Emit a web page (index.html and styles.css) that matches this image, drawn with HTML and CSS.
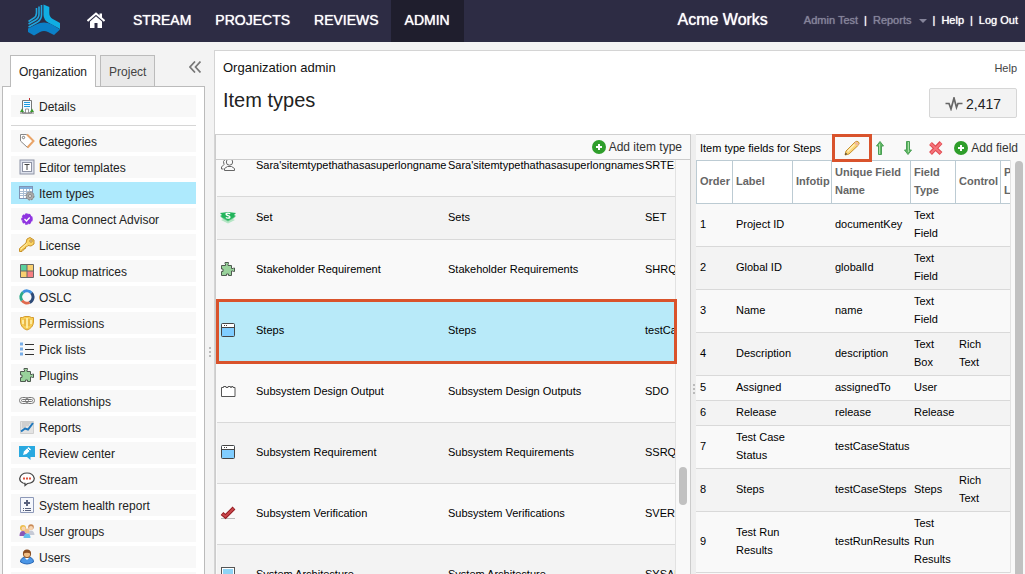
FILE: index.html
```html
<!DOCTYPE html>
<html lang="en">
<head>
  <meta charset="UTF-8" />
  <meta name="viewport" content="width=device-width, initial-scale=1.0"/>
  <title>Organization admin - Item types</title>
  <link rel="stylesheet" href="styles.css">
</head>
<body>

  <!-- Shared icons -->
  <svg class="sprite" aria-hidden="true">
    <symbol id="i-puzzle" viewBox="0 0 16 16">
      <path d="M1.5 4.5h4V3L5 2.5v-1h3.5v1L8 3v1.5h3.500V7.500H13L13.500 7h1v3.500h-1L13 10h-1.500v4.500H8.500V13h-2v1.500h-5v-4H3v-2.500H1.500z" fill="#99d29b" stroke="#4f5a50"/>
    </symbol>
    <symbol id="i-window" viewBox="0 0 16 16">
      <rect x="1.500" y="1.500" width="13" height="13" rx="1" fill="#80cdff" stroke="#444"/>
      <path d="M2 2h12v3H2z" fill="#fff"/>
      <path d="M2 5.500h12" stroke="#444"/>
      <path d="M4 3.500h1M6 3.500h1" stroke="#444"/>
    </symbol>
    <symbol id="i-plus" viewBox="0 0 14 14">
      <circle cx="7" cy="7" r="7" fill="#2f9e2b"/>
      <path d="M7 4v6M4 7h6" stroke="#fff" stroke-width="2"/>
    </symbol>
    <symbol id="i-arrow" viewBox="0 0 10 16">
      <path d="M5 1.500L8.500 6H6.500v8.500h-3V6h-2z" fill="#62b866" stroke="#4a9f55"/>
      <path d="M4.500 4v10" stroke="#a9dfa5"/>
    </symbol>
  </svg>

  <header class="topbar">
    <a href="#" class="logo" aria-label="Jama">
      <svg width="32" height="32" viewBox="0 0 32 32">
        <path d="M8.500 4v5q0 3.500-3 5.200L.5 17.500M11 2.500V10q0 4-3.500 6L.5 20M13.500 1v10q0 4.500-4 7L.5 23" fill="none" stroke="#1fa5dc" stroke-width="1.600"/>
        <path d="M15.500.5l5.800 2.500V9q0 4 3.500 6L32 19v6l-11-6q-5.500-3-5.500-8z" fill="#10aee3"/>
        <path d="M0 24.500l8-4q8-4 16 0l8 5-6 5.500-6-3q-4-2-8 0l-6 3.500L0 28z" fill="#0b80c8"/>
      </svg>
    </a>
    <a href="#" class="home" aria-label="Home">
      <svg width="18" height="17" viewBox="0 0 18 17">
        <path d="M0.500 9L9 1.500 17.500 9" fill="none" stroke="#fff" stroke-width="2"/>
        <path d="M12.500 1.500h2.500v5l-2.500-2z" fill="#fff"/>
        <path d="M3 9.500l6-5.300 6 5.300V16h-4.500v-5h-3v5H3z" fill="#fff"/>
      </svg>
    </a>
    <nav class="mainnav">
      <a href="#">STREAM</a>
      <a href="#">PROJECTS</a>
      <a href="#">REVIEWS</a>
      <a href="#" class="active">ADMIN</a>
    </nav>
    <div class="company">Acme Works</div>
    <div class="userlinks">
      <a href="#" class="dim">Admin Test</a>
      <span>|</span>
      <a href="#" class="dim">Reports <i class="caret"></i></a>
      <span>|</span>
      <a href="#">Help</a>
      <span>|</span>
      <a href="#">Log Out</a>
    </div>
  </header>

  <div class="workspace">

    <!-- Left menu -->
    <aside class="sidebar">
      <div class="tabs">
        <button type="button" class="tab selected">Organization</button>
        <button type="button" class="tab">Project</button>
        <button type="button" class="collapse" aria-label="Collapse">
          <svg width="12" height="12" viewBox="0 0 12 12"><path d="M6 0.500L1 6l5 5.500M11.500 0.500L6.500 6l5 5.500" fill="none" stroke="#777" stroke-width="1.700"/></svg>
        </button>
      </div>
      <ul class="menu">
        <li class="details"><a href="#">
          <svg width="16" height="16" viewBox="0 0 16 16"><path d="M3.500 2.500h9V15h-9z" fill="#f4fbff" stroke="#777"/><path d="M5 4.500h6M5 6.500h6M5 8.500h6" stroke="#1f9be0"/><path d="M10.500 0v2" stroke="#b33"/><path d="M6.500 15v-4h3v4" fill="#fff" stroke="#999"/><path d="M1 14l2-3.500L5 14zM11 14l2-3.500 2 3.500z" fill="#3c9a2f"/><path d="M1 15h14" stroke="#777"/></svg>
          Details</a></li>
        <li><a href="#">
          <svg width="16" height="16" viewBox="0 0 16 16"><path d="M1.500 1.500h6L14.500 8 8.500 14.500 1.500 8z" fill="#fff" stroke="#888"/><path d="M8 1.500L14.500 8 8.500 14.500" fill="none" stroke="#e9a56a" stroke-width="2"/><circle cx="4.500" cy="4.500" r="1.200" fill="#fff" stroke="#777"/></svg>
          Categories</a></li>
        <li><a href="#">
          <svg width="16" height="16" viewBox="0 0 16 16"><rect x="1" y="1" width="14" height="14" fill="#dfe3ee" stroke="#8e93a5" stroke-width="1"/><rect x="3.500" y="3.500" width="9" height="9" fill="#fff" stroke="#8e93a5"/><path d="M5.500 5.500h5M8 5.500V11" stroke="#444"/></svg>
          Editor templates</a></li>
        <li class="current"><a href="#">
          <svg width="16" height="16" viewBox="0 0 16 16"><rect x="0.500" y="1.500" width="13" height="12" fill="#fff" stroke="#7f94b5"/><path d="M1 3h12" stroke="#7fb0dd" stroke-width="2"/><path d="M1 6.500h12M1 8.500h12M1 10.500h12M4.500 4v9M7.500 4v9M10.500 4v9" stroke="#a9bdd3"/><circle cx="11" cy="11" r="4" fill="#aaa" stroke="#808080" stroke-dasharray="2 1"/><circle cx="11" cy="11" r="1.500" fill="#eee" stroke="#888"/></svg>
          Item types</a></li>
        <li><a href="#">
          <svg width="16" height="16" viewBox="0 0 16 16"><circle cx="8" cy="8" r="5" fill="#8f35e0" stroke="#8f35e0" stroke-width="1.500" stroke-dasharray="2.500 1"/><path d="M5.500 8l2 2 3.200-3.500" fill="none" stroke="#fff" stroke-width="1.300"/></svg>
          Jama Connect Advisor</a></li>
        <li><a href="#">
          <svg width="16" height="16" viewBox="0 0 16 16"><path d="M7 6l1-4 3-1.500 4 2.500v4l-3 2-3-.5-1.500 1.500-1 0v1.500H5V13H3v1.500H.500v-3z" fill="#fbd565" stroke="#c8922a"/><path d="M2 12l6-5.500" stroke="#fff0b0"/><circle cx="12" cy="4" r="1.200" fill="#fff" stroke="#b98222"/></svg>
          License</a></li>
        <li><a href="#">
          <svg width="16" height="16" viewBox="0 0 16 16"><path d="M2 2h6v6H2z" fill="#58cf9c"/><path d="M8 2h6v6H8zM2 8h6v6H2z" fill="#f8cf70"/><path d="M8 8h6v6H8z" fill="#f77f83"/><path d="M1.500 1.500h13v13h-13zM8 2v12M2 8h12" fill="none" stroke="#676767"/></svg>
          Lookup matrices</a></li>
        <li><a href="#">
          <svg width="16" height="16" viewBox="0 0 16 16" fill="none" stroke-width="3"><path d="M4 3.300A6 6 0 0 1 12.500 4" stroke="#3e8ede"/><path d="M12.500 4A6 6 0 0 1 10.500 13.500" stroke="#2d4a77"/><path d="M10.500 13.500A6 6 0 0 1 3 11.500" stroke="#e06a4e"/><path d="M3 11.500A6 6 0 0 1 4 3.300" stroke="#2aa98a"/></svg>
          OSLC</a></li>
        <li><a href="#">
          <svg width="16" height="16" viewBox="0 0 16 16"><path d="M1.500 2.500Q4 3 5.500 1.500H10.500Q12 3 14.500 2.500V7Q14 13 8 15 2 13 1.500 7z" fill="#f7ce55" stroke="#d59b2d"/><path d="M8 3v10M4 5v4M12 5v4" stroke="#fff3ba" stroke-width="1.500"/><path d="M6 4v7M10 4v7" stroke="#dda238"/></svg>
          Permissions</a></li>
        <li><a href="#">
          <svg width="16" height="16" viewBox="0 0 16 16"><path d="M6 3.500h9M6 8.500h9M6 13.500h9" stroke="#333"/><path d="M1 3h3M1 8h3M1 13h3" stroke="#78aee8" stroke-width="3"/></svg>
          Pick lists</a></li>
        <li><a href="#"><svg width="16" height="16"><use href="#i-puzzle"/></svg>
          Plugins</a></li>
        <li><a href="#">
          <svg width="16" height="16" viewBox="0 0 16 16" fill="none" stroke="#777"><rect x="0.500" y="4.500" width="9" height="6" rx="3"/><rect x="6.500" y="4.500" width="9" height="6" rx="3"/><rect x="2.500" y="6.500" width="11" height="2" rx="1"/></svg>
          Relationships</a></li>
        <li><a href="#">
          <svg width="16" height="16" viewBox="0 0 16 16"><path d="M1.500 2.500h13v12h-13z" fill="#e3e3e3" stroke="#cfcfcf"/><path d="M3 6h7M3 8h4M3 4h10" stroke="#bbb"/><path d="M2 12.500l4-3 3 1L14 4" fill="none" stroke="#1f78bd" stroke-width="2"/></svg>
          Reports</a></li>
        <li><a href="#">
          <svg width="16" height="16" viewBox="0 0 16 16"><path d="M0 1h16v11h-4.500v3L8 12H0z" fill="#29a9e0"/><path d="M4 10l1-3.500L9.500 2l2.500 2.500L7.500 9z" fill="#fff"/><path d="M8.500 3.500L11 6" stroke="#29a9e0"/></svg>
          Review center</a></li>
        <li><a href="#">
          <svg width="16" height="16" viewBox="0 0 16 16"><path d="M4 12Q.500 10.500.700 7.500 2 2 8 2t7.300 5.500Q15 12 8.500 12.500L6 14.500 6 12.300z" fill="#fff" stroke="#444" stroke-width="1.200"/><path d="M4 7.500h2M7 7.500h2M10 7.500h2" stroke="#e0523d" stroke-width="2"/></svg>
          Stream</a></li>
        <li><a href="#">
          <svg width="16" height="16" viewBox="0 0 16 16"><path d="M1.500.500h13v15h-13z" fill="#f5f7fc" stroke="#8d99b8"/><path d="M8 3v6M5 6h6" stroke="#57607c" stroke-width="2"/><path d="M4 11.500h1M6 11.500h6M4 13.500h1M6 13.500h6" stroke="#57607c"/></svg>
          System health report</a></li>
        <li><a href="#">
          <svg width="16" height="16" viewBox="0 0 16 16"><circle cx="12" cy="4" r="2.800" fill="#c98a57"/><circle cx="12" cy="5" r="2" fill="#f8d5b0"/><path d="M9 12q0-4.500 3-4.500T15.500 12z" fill="#c6cad6"/><circle cx="4" cy="5" r="3" fill="#edbe4b"/><circle cx="4.500" cy="5.500" r="2" fill="#f8d5b0"/><path d="M.500 13q0-5 3.500-5t4 5z" fill="#8b58b5"/><circle cx="8" cy="8" r="2.500" fill="#f0c08c"/><path d="M4.500 15q0-4.500 3.500-4.500t3.500 4.500z" fill="#66c0ec"/></svg>
          User groups</a></li>
        <li><a href="#">
          <svg width="16" height="16" viewBox="0 0 16 16"><path d="M1.500 13q0-5 6.500-5t6.500 5q-6.500 4-13 0z" fill="#4b96e6" stroke="#2867b5"/><circle cx="8" cy="5" r="3.700" fill="#f2bd83" stroke="#8b5328"/><path d="M4 5q0-4.500 4-4.500T12 5q-4-2.500-8 0z" fill="#8b4e22"/><path d="M6 9l2 2 2-2z" fill="#fff"/></svg>
          Users</a></li>
        <li></li>
      </ul>
    </aside>

    <div class="splitter outer"><i></i><i></i><i></i></div>

    <!-- Admin content -->
    <main class="content">
      <div class="pagehead">
        <div class="crumb">
          <span>Organization admin</span>
          <a href="#">Help</a>
        </div>
        <div class="headrow">
          <h1>Item types</h1>
          <button type="button" class="pulse">
            <svg width="18" height="14" viewBox="0 0 18 14"><path d="M0.500 6.500H4L6 12 9 1l2.500 9.500L13 6.500h4.500" fill="none" stroke="#666" stroke-width="1.700"/></svg>
            2,417
          </button>
        </div>
      </div>

      <div class="panes">
        <section class="pane types">
          <div class="toolbar">
            <button type="button" class="add"><svg width="14" height="14"><use href="#i-plus"/></svg>Add item type</button>
          </div>
          <div class="scroller" id="typeList">
            <table class="typetable">
              <colgroup><col class="c-icon"><col class="c-name"><col class="c-plural"><col></colgroup>
              <tr>
                <td><svg width="16" height="16" viewBox="0 0 16 16" fill="none" stroke="#666"><circle cx="9.500" cy="5" r="3.200"/><path d="M4.500 13.500v-2l3-2h4l3 2v2zM5 2.500Q2.500 4 4 7.500L1.500 10v2h2"/></svg></td>
                <td>Sara'sitemtypethathasasuperlongname</td><td>Sara'sitemtypethathasasuperlongnames</td><td>SRTES</td>
              </tr>
              <tr class="short">
                <td><svg width="16" height="16" viewBox="0 0 16 16"><path d="M1 11l7 3.500 7-3.500-7-3z" fill="#b5e5c5"/><path d="M1 8.500L8 12.500l7-4-7-3z" fill="#65cb8b"/><path d="M0 4l8-1 8 1-2 2 2 1-8 4.500L0 7l2-1z" fill="#22b45b"/><path d="M10.200 4.800Q8 3.500 6.200 4.600 5.600 6 8 6.600T9.800 8.600Q8 9.800 5.800 8.500" fill="none" stroke="#fff" stroke-width="1.300"/></svg></td>
                <td>Set</td><td>Sets</td><td>SET</td>
              </tr>
              <tr>
                <td><svg width="16" height="16"><use href="#i-puzzle"/></svg></td>
                <td>Stakeholder Requirement</td><td>Stakeholder Requirements</td><td>SHRQ</td>
              </tr>
              <tr class="picked">
                <td><svg width="16" height="16"><use href="#i-window"/></svg><div class="frame"></div></td>
                <td>Steps</td><td>Steps</td><td>testCa</td>
              </tr>
              <tr>
                <td><svg width="16" height="16" viewBox="0 0 16 16"><path d="M1.500 13.500v-9h2v-1h2.500v1h2v-1h2.500v1h1v-1h1.500v1h2v9z" fill="#fff" stroke="#555"/></svg></td>
                <td>Subsystem Design Output</td><td>Subsystem Design Outputs</td><td>SDO</td>
              </tr>
              <tr>
                <td><svg width="16" height="16"><use href="#i-window"/></svg></td>
                <td>Subsystem Requirement</td><td>Subsystem Requirements</td><td>SSRQ</td>
              </tr>
              <tr>
                <td><svg width="16" height="16" viewBox="0 0 16 16"><path d="M1 13.500h14" stroke="#bbb"/><path d="M2 8.500L5.500 11.500 14 3" fill="none" stroke="#951c22" stroke-width="4"/><path d="M2.500 9L5.500 11.500 13.500 3.500" fill="none" stroke="#c9484c" stroke-width="2"/></svg></td>
                <td>Subsystem Verification</td><td>Subsystem Verifications</td><td>SVER</td>
              </tr>
              <tr>
                <td><svg width="16" height="16" viewBox="0 0 16 16"><rect x="1.500" y="1.500" width="13" height="13" fill="#fff" stroke="#555"/><path d="M3 3h10v10H3z" fill="#8fd4f5"/></svg></td>
                <td>System Architecture</td><td>System Architecture</td><td>SYSAR</td>
              </tr>
            </table>
          </div>
          <div class="thumb"></div>
        </section>

        <div class="splitter inner"><i></i><i></i><i></i></div>

        <section class="pane fields">
          <div class="toolbar">
            <span class="title">Item type fields for Steps</span>
            <button type="button" class="tool edit" aria-label="Edit">
              <svg width="16" height="16" viewBox="0 0 16 16"><path d="M1 15l1-4L11 2Q13 .500 14.500 2T14 5.500L5 14z" fill="#fbd676" stroke="#c6902f"/><path d="M10.500 3l3 3 1.300-1.800-3-3z" fill="#eeb7a0"/><path d="M3.500 11.500l7-7" stroke="#fff0bd" stroke-width="1.500"/><path d="M1 15l.7-2.200L3.200 14z" fill="#333"/></svg>
            </button>
            <button type="button" class="tool" aria-label="Move up"><svg width="10" height="16"><use href="#i-arrow"/></svg></button>
            <button type="button" class="tool down" aria-label="Move down"><svg width="10" height="16"><use href="#i-arrow"/></svg></button>
            <button type="button" class="tool" aria-label="Delete">
              <svg width="16" height="16" viewBox="0 0 16 16"><path d="M2.500 3.500l10.500 10M13 2.500L2.500 13.500" stroke="#e04a50" stroke-width="4"/><path d="M2.500 3.500l10 9.500M13 3L3 13" stroke="#f5737a" stroke-width="2"/></svg>
            </button>
            <button type="button" class="add"><svg width="14" height="14"><use href="#i-plus"/></svg>Add field</button>
          </div>
          <div class="scroller">
            <table class="fieldtable">
              <colgroup><col class="f-order"><col class="f-label"><col class="f-info"><col class="f-unique"><col class="f-type"><col class="f-control"><col></colgroup>
              <thead>
                <tr><th>Order</th><th>Label</th><th>Infotip</th><th>Unique Field<br>Name</th><th>Field<br>Type</th><th>Control</th><th>P<br>L</th></tr>
              </thead>
              <tbody>
                <tr><td>1</td><td>Project ID</td><td></td><td>documentKey</td><td>Text<br>Field</td><td></td><td></td></tr>
                <tr><td>2</td><td>Global ID</td><td></td><td>globalId</td><td>Text<br>Field</td><td></td><td></td></tr>
                <tr><td>3</td><td>Name</td><td></td><td>name</td><td>Text<br>Field</td><td></td><td></td></tr>
                <tr><td>4</td><td>Description</td><td></td><td>description</td><td>Text<br>Box</td><td>Rich<br>Text</td><td></td></tr>
                <tr><td>5</td><td>Assigned</td><td></td><td>assignedTo</td><td>User</td><td></td><td></td></tr>
                <tr><td>6</td><td>Release</td><td></td><td>release</td><td>Release</td><td></td><td></td></tr>
                <tr><td>7</td><td>Test Case<br>Status</td><td></td><td>testCaseStatus</td><td></td><td></td><td></td></tr>
                <tr><td>8</td><td>Steps</td><td></td><td>testCaseSteps</td><td>Steps</td><td>Rich<br>Text</td><td></td></tr>
                <tr><td>9</td><td>Test Run<br>Results</td><td></td><td>testRunResults</td><td>Test<br>Run<br>Results</td><td></td><td></td></tr>
              </tbody>
            </table>
          </div>
          <div class="thumb"></div>
        </section>
      </div>
    </main>
  </div>

  <script>
    document.getElementById("typeList").scrollTop = 24;
  </script>
</body>
</html>
```

FILE: styles.css
```css
* {
  box-sizing: border-box;
}

body {
  margin: 0;
  height: 100vh;
  display: flex;
  flex-direction: column;
  overflow: hidden;
  background: #f3f3f3;
  font-family: "Liberation Sans", Arial, sans-serif;
  font-size: 12px;
  color: #222;
}

a {
  color: inherit;
  text-decoration: none;
}

button {
  font: inherit;
  color: inherit;
  background: none;
  border: 0;
  padding: 0;
  cursor: pointer;
}

svg {
  display: block;
  flex: none;
}

.sprite {
  position: absolute;
  width: 0;
  height: 0;
}

/* top bar */
.topbar {
  display: flex;
  align-items: center;
  flex: none;
  height: 42px;
  padding: 0 7px 0 28px;
  background: #2d2c44;
  color: #fff;
}

.logo {
  padding-bottom: 2px;
}

.home {
  margin: 0 16px 0 27px;
  padding-bottom: 2px;
}

.mainnav {
  display: flex;
  align-self: stretch;
}

.mainnav a {
  display: flex;
  align-items: center;
  padding: 0 12px 2px;
  font-size: 14px;
  text-shadow: 0 0 1px #fff;
}

.mainnav .active {
  padding: 0 14px 2px;
  background: #1f1e2d;
}

.company {
  margin-left: auto;
  padding-bottom: 2px;
  font-size: 16px;
  text-shadow: 0 0 1px #fff;
}

.userlinks {
  display: flex;
  align-items: center;
  gap: 6px;
  margin-left: 36px;
  padding-bottom: 2px;
  font-size: 11px;
  text-shadow: 0 0 1px currentColor;
  white-space: nowrap;
}

.userlinks .dim {
  color: #85849a;
}

.caret {
  display: inline-block;
  margin: 0 0 1px 4px;
  border: 4px solid transparent;
  border-top-color: #85849a;
  border-bottom: 0;
}

/* layout */
.workspace {
  display: flex;
  flex: 1;
  min-height: 0;
}

.sidebar {
  display: flex;
  flex-direction: column;
  flex: none;
  width: 205px;
  padding: 13px 0 0 2px;
}

.tabs {
  display: flex;
  gap: 4px;
  padding: 0 4px 0 8px;
  height: 31px;
}

.tab {
  padding: 1px 8px 0;
  border: 1px solid #bbb;
  border-bottom: 0;
  background: #e9e9e9;
  color: #444;
}

.tab.selected {
  height: 32px;
  background: #fff;
  color: #222;
  z-index: 1;
}

.collapse {
  margin-left: auto;
  padding-bottom: 8px;
}

.menu {
  flex: 1;
  min-height: 0;
  overflow: hidden;
  margin: 0;
  padding: 8px 8px 0;
  border: 1px solid #bbb;
  border-bottom: 0;
  background: #fff;
  list-style: none;
}

.menu li {
  height: 22px;
  margin-bottom: 4px;
  background: #f8f8f8;
}

.menu a {
  display: flex;
  align-items: center;
  gap: 4px;
  height: 22px;
  padding: 2px 0 0 8px;
}

.menu svg {
  margin-bottom: 2px;
}

.menu .details {
  margin-bottom: 13px;
  box-shadow: 0 8px #fff, 0 9px #d6d6d6;
}

.menu .current {
  background: #aeeafd;
}

.splitter {
  display: flex;
  flex-direction: column;
  align-items: center;
  gap: 2px;
  flex: none;
}

.splitter i {
  width: 2px;
  height: 2px;
  background: #bbb;
}

.splitter.outer {
  width: 9px;
  padding-top: 305px;
}

.splitter.inner {
  width: 5px;
  padding-top: 250px;
  background: #eee;
}

.content {
  display: flex;
  flex-direction: column;
  flex: 1;
  min-width: 0;
  margin-top: 8px;
  border: 1px solid #d4d4d4;
  border-width: 1px 0 0 1px;
  background: #fff;
}

.pagehead {
  height: 83px;
  padding: 9px 8px 0;
}

.crumb {
  display: flex;
  justify-content: space-between;
  line-height: 16px;
  font-size: 13px;
  color: #111;
}

.crumb a {
  font-size: 11px;
  color: #444;
}

.headrow {
  display: flex;
  justify-content: space-between;
  margin-top: 12px;
}

h1 {
  margin: 0;
  font-size: 20px;
  font-weight: normal;
  line-height: 24px;
}

.pulse {
  display: flex;
  align-items: center;
  justify-content: center;
  gap: 3px;
  width: 88px;
  height: 30px;
  padding-top: 1px;
  border: 1px solid #d6d6d6;
  border-radius: 2px;
  background: #f3f3f3;
  font-size: 14px;
}

/* split panes */
.panes {
  display: flex;
  flex: 1;
  min-height: 0;
}

.pane {
  position: relative;
  display: flex;
  flex-direction: column;
  border-top: 1px solid #d0d0d0;
  background: #f9f9f9;
}

.types {
  flex: 1;
  min-width: 0;
  border-left: 1px solid #ccc;
  border-right: 1px solid #ccc;
}

.fields {
  width: 329px;
}

.toolbar {
  display: flex;
  align-items: center;
  flex: none;
  height: 25px;
  color: #333;
}

.types .toolbar {
  padding-right: 8px;
  justify-content: flex-end;
  border-bottom: 1px solid #ccc;
}

.add {
  display: flex;
  align-items: center;
  gap: 3px;
  white-space: nowrap;
}

.scroller {
  flex: 1;
  min-height: 0;
  overflow: hidden;
}

.types .scroller {
  padding: 0 14px 0 1px;
}

.thumb {
  position: absolute;
  right: 3px;
  top: 332px;
  width: 8px;
  height: 38px;
  border-radius: 4px;
  background: #c1c1c1;
}

.fields .thumb {
  right: 2px;
  top: 26px;
  bottom: -8px;
  height: auto;
}

table {
  width: 100%;
  border-collapse: separate;
  border-spacing: 0;
  table-layout: fixed;
  font-size: 11px;
  line-height: 18px;
  color: #000;
}

td {
  padding: 2px 0 4px 3px;
  border-bottom: 1px solid #d9d9d9;
  white-space: nowrap;
}

td:last-child {
  overflow: hidden;
}

.typetable {
  border-right: 1px solid #e2e2e2;
}

.typetable td {
  height: 61px;
}

.typetable .short td {
  height: 43px;
}

.typetable tr:nth-child(even),
.fieldtable tbody tr:nth-child(even) {
  background: #f3f3f3;
}

.typetable td:last-child {
  padding-left: 4px;
}

.typetable tr.picked {
  position: relative;
  background: #b8eaf9;
}

.frame {
  position: absolute;
  inset: -2px -2px -2px -1px;
  border: 3px solid #d9532c;
}

.c-icon { width: 36px; }
.c-name { width: 192px; }
.c-plural { width: 196px; }

/* field list */
.fields .toolbar {
  padding: 0 7px 0 4px;
}

.title {
  margin-right: auto;
  font-size: 11px;
  color: #000;
  white-space: nowrap;
}

.fields .add {
  margin-left: 4px;
}

.tool {
  display: flex;
  justify-content: center;
  align-items: center;
  width: 28px;
  height: 24px;
}

.tool.edit {
  width: 40px;
  height: 28px;
  margin-right: -6px;
  border: 3px solid #d9532c;
  z-index: 1;
}

.tool.down svg {
  transform: rotate(180deg);
}

.fields .scroller {
  padding: 0 14px 0 0;
}

.fieldtable td:first-child {
  padding-left: 4px;
}

th {
  height: 44px;
  padding: 2px 0 4px 3px;
  border: 1px solid #bccbd3;
  border-left: 0;
  background: #fff;
  color: #666;
  text-align: left;
  white-space: nowrap;
  overflow: hidden;
}

th:first-child {
  border-left: 1px solid #bccbd3;
}

th:last-child {
  border-right: 0;
}

.fieldtable {
  border-right: 1px solid #e2e2e2;
}

.f-order { width: 37px; }
.f-label { width: 60px; }
.f-info { width: 39px; }
.f-unique { width: 79px; }
.f-type { width: 45px; }
.f-control { width: 45px; }
```
